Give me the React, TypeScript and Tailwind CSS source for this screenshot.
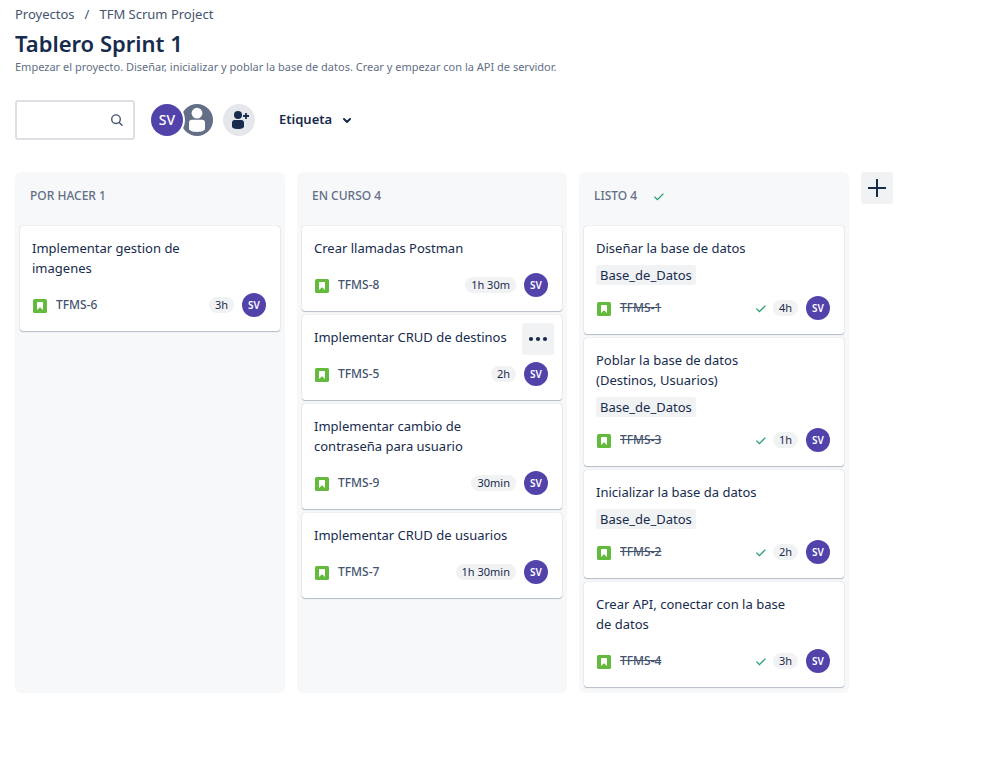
import React from "react";

type Issue = {
  id: string;
  title: string;
  estimate: string;
  label?: string;
  done?: boolean;
  menu?: boolean;
};

type Column = { name: string; done?: boolean; issues: Issue[] };

const columns: Column[] = [
  {
    name: "Por hacer",
    issues: [{ id: "TFMS-6", title: "Implementar gestion de imagenes", estimate: "3h" }],
  },
  {
    name: "En curso",
    issues: [
      { id: "TFMS-8", title: "Crear llamadas Postman", estimate: "1h 30m" },
      { id: "TFMS-5", title: "Implementar CRUD de destinos", estimate: "2h", menu: true },
      { id: "TFMS-9", title: "Implementar cambio de contraseña para usuario", estimate: "30min" },
      { id: "TFMS-7", title: "Implementar CRUD de usuarios", estimate: "1h 30min" },
    ],
  },
  {
    name: "Listo",
    done: true,
    issues: [
      { id: "TFMS-1", title: "Diseñar la base de datos", estimate: "4h", label: "Base_de_Datos", done: true },
      { id: "TFMS-3", title: "Poblar la base de datos (Destinos, Usuarios)", estimate: "1h", label: "Base_de_Datos", done: true },
      { id: "TFMS-2", title: "Inicializar la base da datos", estimate: "2h", label: "Base_de_Datos", done: true },
      { id: "TFMS-4", title: "Crear API, conectar con la base de datos", estimate: "3h", done: true },
    ],
  },
];

function Check() {
  return (
    <svg className="size-3 shrink-0" viewBox="0 0 12 12" fill="none" stroke="#22a06b" strokeWidth="1.3" aria-hidden="true">
      <path d="M1.4 6.6 4.4 9.6 10.4 3.6" />
    </svg>
  );
}

function StoryIcon() {
  return (
    <svg className="mt-0.5 size-4 shrink-0" viewBox="0 0 16 16" aria-hidden="true">
      <rect x="1" y="1" width="14" height="14" rx="1.6" fill="#63ba3c" />
      <path d="M5 4.6c0-.4.3-.6.6-.6h4.8c.3 0 .6.2.6.6V12L8 9.2 5 12z" fill="#fff" />
    </svg>
  );
}

function IssueCard({ issue }: { issue: Issue }) {
  return (
    <li className="relative rounded-[3px] bg-white px-3 pt-3 pb-[14px] shadow-[0_1px_1px_#091e4240,0_0_1px_#091e424f]">
      <h3 className="w-[202px] text-[13px] leading-5 text-[#172b4d]">{issue.title}</h3>
      {issue.label && (
        <span className="mt-[7px] block w-fit rounded-[3px] bg-[#f1f2f4] px-1 text-[13px] leading-5">{issue.label}</span>
      )}
      <div className={`flex items-center justify-between ${issue.label ? "mt-[11px]" : "mt-[15px]"}`}>
        <div className="flex items-center gap-2">
          <StoryIcon />
          <a href="#" className={`text-xs leading-4 font-medium text-[#44546f] ${issue.done ? "line-through" : ""}`}>
            {issue.id}
          </a>
        </div>
        <div className="flex items-center pr-0.5">
          {issue.done && <Check />}
          <span className="mr-2 ml-1.5 rounded-full bg-[#f1f2f4] px-1.5 text-[11px] leading-4">{issue.estimate}</span>
          <span className="flex size-6 items-center justify-center rounded-full bg-[#5243aa] text-[10px] font-semibold text-white">
            SV
          </span>
        </div>
      </div>
      {issue.menu && (
        <button
          type="button"
          aria-label="Más acciones"
          className="absolute top-2 right-2 flex size-8 items-center justify-center rounded-[3px] bg-[#f1f2f4]"
        >
          <svg className="h-2 w-5" viewBox="0 0 20 8" fill="#172b4d" aria-hidden="true">
            <circle cx="3" cy="4" r="2.1" />
            <circle cx="10" cy="4" r="2.1" />
            <circle cx="17" cy="4" r="2.1" />
          </svg>
        </button>
      )}
    </li>
  );
}

export default function App() {
  return (
    <main className="min-h-screen bg-white px-[15px] pt-1 pb-6 font-['Noto_Sans','Open_Sans',sans-serif] text-[#172b4d]">
      <nav aria-label="Ruta" className="flex gap-2 text-[13px] leading-5 text-[#44546f]">
        <a href="#">Proyectos</a>
        <span className="px-0.5">/</span>
        <a href="#">TFM Scrum Project</a>
      </nav>
      <h1 className="mt-1 text-[22px] leading-[30px] font-semibold">Tablero Sprint 1</h1>
      <p className="text-[11px] leading-[18px] text-[#626f86]">
        Empezar el proyecto. Diseñar, inicializar y poblar la base de datos. Crear y empezar con la API de servidor.
      </p>

      <div className="mt-6 flex items-center">
        <label className="flex h-10 w-[120px] items-center rounded-[3px] border-2 border-[#dcdfe4] pr-2">
          <input type="text" aria-label="Buscar en el tablero" className="min-w-0 flex-1 px-2 text-[13px] outline-none" />
          <svg className="size-4 shrink-0" viewBox="0 0 16 16" fill="none" stroke="#44546f" strokeWidth="1.4" strokeLinecap="round" aria-hidden="true">
            <circle cx="7" cy="7.2" r="4.3" />
            <path d="m10.2 10.4 2.8 2.8" />
          </svg>
        </label>
        <button type="button" className="z-10 ml-4 flex size-8 items-center justify-center rounded-full bg-[#5243aa] text-sm font-medium text-white ring-2 ring-white">
          SV
        </button>
        <button type="button" aria-label="Sin asignar" className="-ml-0.5 size-8">
          <svg className="size-8" viewBox="0 0 32 32" aria-hidden="true">
            <circle cx="16" cy="16" r="16" fill="#626f86" />
            <circle cx="16" cy="9.2" r="5.4" fill="#fff" />
            <path d="M8 18.6c0-1.6 1.2-2.8 2.8-2.8h10.4c1.6 0 2.8 1.2 2.8 2.8v6c0 2.2-3.4 3.4-8 3.4s-8-1.2-8-3.4z" fill="#fff" />
          </svg>
        </button>
        <button type="button" aria-label="Añadir personas" className="ml-[10px] size-8">
          <svg className="size-8" viewBox="0 0 32 32" fill="#172b4d" aria-hidden="true">
            <circle cx="16" cy="16" r="16" fill="#e6e7eb" />
            <circle cx="15" cy="11" r="4" />
            <path d="M9 18.5c0-1.4 1.1-2.5 2.5-2.5h7c1.4 0 2.5 1.1 2.5 2.5v3.7c0 1.8-2.5 2.8-6 2.8s-6-1-6-2.8z" />
            <path d="M23 9v6M20 12h6" stroke="#172b4d" strokeWidth="1.8" />
          </svg>
        </button>
        <button type="button" className="ml-6 flex h-8 items-center gap-[7px] text-[13px] font-semibold">
          Etiqueta
          <svg className="size-4" viewBox="0 0 16 16" fill="none" stroke="#172b4d" strokeWidth="2" strokeLinecap="round" strokeLinejoin="round" aria-hidden="true">
            <path d="m5 7 3 3 3-3" />
          </svg>
        </button>
      </div>

      <div className="mt-8 flex gap-3">
        {columns.map((column) => (
          <section key={column.name} className="w-[270px] shrink-0 rounded-md bg-[#f7f8f9] px-[5px] pb-[6px]">
            <div className="flex h-[54px] items-start gap-4 px-[10px] pt-4">
              <h2 className="text-xs leading-4 font-medium text-[#626f86] uppercase">
                {column.name} {column.issues.length}
              </h2>
              {column.done && (
                <span className="mt-0.5">
                  <Check />
                </span>
              )}
            </div>
            <ul className="flex flex-col gap-1">
              {column.issues.map((issue) => (
                <IssueCard key={issue.id} issue={issue} />
              ))}
            </ul>
          </section>
        ))}
        <button type="button" aria-label="Crear columna" className="flex size-8 shrink-0 items-center justify-center rounded-[3px] bg-[#f1f2f4]">
          <svg className="size-[18px]" viewBox="0 0 18 18" stroke="#172b4d" strokeWidth="2" aria-hidden="true">
            <path d="M9 0v18M0 9h18" />
          </svg>
        </button>
      </div>
    </main>
  );
}
